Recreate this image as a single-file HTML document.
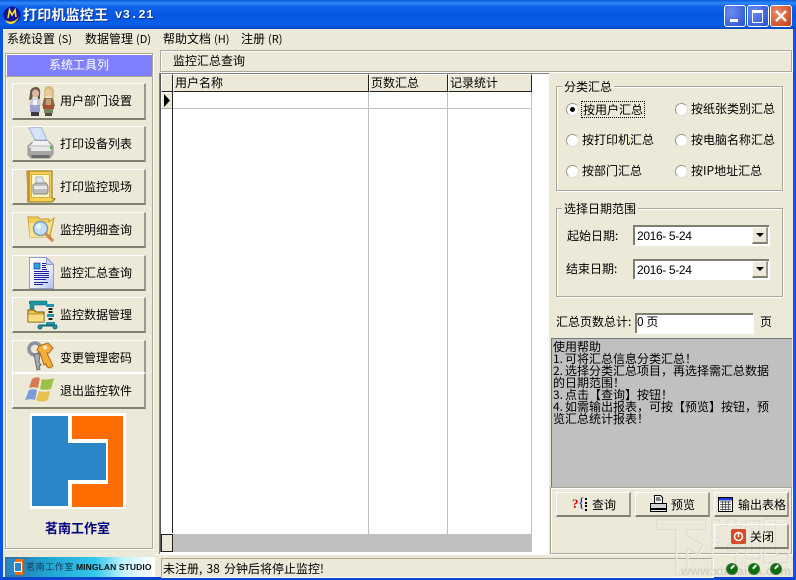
<!DOCTYPE html>
<html><head><meta charset="utf-8"><style>
html,body{margin:0;padding:0}
body{width:796px;height:580px;overflow:hidden;position:relative;background:#ECE9D8;font:12px/14px "WenQuanYi Zen Hei","Noto Sans CJK SC","Liberation Sans",sans-serif;color:#000}
div,svg{position:absolute}
.t{white-space:nowrap}
.m{font-size:11px;margin-left:3px}
.btn{background:#ECE9D8;border-top:1px solid #fff;border-left:1px solid #fff;border-right:2px solid #9c9a8c;border-bottom:2px solid #808070;box-sizing:border-box}
.sb{left:12px;width:134px}
.sl{left:60px;white-space:nowrap;font-size:12px}
.g{border:1px solid #aca899;box-shadow:1px 1px 0 #fff,inset 1px 1px 0 #fff;box-sizing:border-box}
.lg{background:#ECE9D8;padding:0 2px;white-space:nowrap}
.r{width:11px;height:11px;border-radius:50%;background:#fff;border:1px solid #9a988a;border-right-color:#ddd;border-bottom-color:#ddd;box-sizing:content-box}
.rl{white-space:nowrap}
.cb{background:#fff;border-top:2px solid #7f7d6f;border-left:2px solid #7f7d6f;box-sizing:border-box;box-shadow:1px 1px 0 #fff}
.hd{background:#ECE9D8;border-right:1px solid #222;border-bottom:1px solid #222;box-sizing:border-box;height:18px;top:74px;border-top:1px solid #fff;border-left:1px solid #fff;white-space:nowrap;padding-left:1px;line-height:15px}
.led{width:10px;height:10px;top:564px;border-radius:50%;background:#0b6e0b;box-shadow:0 0 0 1px #3c7a3c}
.led:after{content:"";position:absolute;left:3px;top:2px;width:5px;height:2px;background:#e8f4e8;transform:rotate(-45deg)}
.n{display:inline-block;width:12px}
.d{font-family:'Liberation Sans',sans-serif;font-size:12px;letter-spacing:-.35px}
</style></head><body>

<!-- window frame -->
<div style="left:0;top:0;width:796px;height:580px;box-sizing:border-box;border-left:3px solid #0A55E3;border-right:3px solid #0A55E3;border-bottom:3px solid #0A45D0"></div>
<!-- title bar -->
<div style="left:0;top:0;width:796px;height:29px;background:linear-gradient(180deg,#0A5AE0 0,#2F86F8 3px,#0E62EA 7px,#0656E0 16px,#0760EA 24px,#0554D8 27px,#0345BC 29px)"></div>
<svg style="left:3px;top:6px" width="18" height="18" viewBox="0 0 18 18"><circle cx="9" cy="9" r="8.500" fill="#12129a"/><path d="M2 14c5 3 11 2 14-4-1 5-5 8-8 8-3 0-5-2-6-4z" fill="#ffe11c"/><path d="M5 12l1.500-8 2.500 5 3-5 1 7" fill="none" stroke="#ffe11c" stroke-width="1.600"/></svg>
<div class="t" style="left:23px;top:7px;color:#fff;font-size:14px;line-height:16px;font-weight:bold;letter-spacing:0.2px;text-shadow:1px 1px 0 #0a2f9a">打印机监控王</div>
<div class="t" style="left:115px;top:7px;color:#fff;font:bold 12px/16px 'Liberation Mono',monospace;letter-spacing:0.6px;text-shadow:1px 1px 0 #0a2f9a">v3.21</div>
<!-- window buttons -->
<div style="left:724px;top:5px;width:20px;height:20px;border:1px solid #fff;border-radius:3px;background:radial-gradient(circle at 30% 30%,#6a8cf0,#2a4fd0)"><div style="left:5px;top:13px;width:8px;height:3px;background:#fff"></div></div>
<div style="left:747px;top:5px;width:20px;height:20px;border:1px solid #fff;border-radius:3px;background:radial-gradient(circle at 30% 30%,#6a8cf0,#2a4fd0)"><div style="left:4px;top:4px;width:9px;height:9px;border:1px solid #fff;border-top:3px solid #fff"></div></div>
<div style="left:770px;top:5px;width:20px;height:20px;border:1px solid #fff;border-radius:3px;background:radial-gradient(circle at 30% 30%,#ec8a68,#c63c14)"><svg style="left:4px;top:4px" width="12" height="12"><path d="M1 1l10 10M11 1L1 11" stroke="#fff" stroke-width="2.400"/></svg></div>

<!-- menu -->
<div class="t" style="left:7px;top:32px">系统设置<span class="m">(S)</span></div>
<div class="t" style="left:85px;top:32px">数据管理<span class="m">(D)</span></div>
<div class="t" style="left:163px;top:32px">帮助文档<span class="m">(H)</span></div>
<div class="t" style="left:241px;top:32px">注册<span class="m">(R)</span></div>

<!-- left panel -->
<div class="g" style="left:5px;top:53px;width:148px;height:496px"></div>
<div style="left:7px;top:55px;width:145px;height:21px;background:#8080FF"></div>
<div style="left:5px;top:76px;width:148px;height:1px;background:#aca899"></div>
<div class="t" style="left:49px;top:58px;color:#fff">系统工具列</div>

<div class="btn sb" style="top:83px;height:37px"></div>
<div class="btn sb" style="top:126px;height:36px"></div>
<div class="btn sb" style="top:169px;height:36px"></div>
<div class="btn sb" style="top:212px;height:36px"></div>
<div class="btn sb" style="top:255px;height:36px"></div>
<div class="btn sb" style="top:297px;height:36px"></div>
<div class="btn sb" style="top:340px;height:33px;border-bottom:1px solid #fff"></div>
<div class="btn sb" style="top:373px;height:36px"></div>
<div class="sl" style="top:94px">用户部门设置</div>
<div class="sl" style="top:137px">打印设备列表</div>
<div class="sl" style="top:180px">打印监控现场</div>
<div class="sl" style="top:223px">监控明细查询</div>
<div class="sl" style="top:266px">监控汇总查询</div>
<div class="sl" style="top:308px">监控数据管理</div>
<div class="sl" style="top:351px">变更管理密码</div>
<div class="sl" style="top:384px">退出监控软件</div>

<!-- icon: people -->
<svg style="left:26px;top:85px" width="30" height="34" viewBox="0 0 30 34">
<path d="M4 8c0-4 3-6 6-6s5 3 4 7l0 5h-2l-1-4H7l-1 5H3z" fill="#6b5848"/><ellipse cx="9.500" cy="8.500" rx="3.500" ry="4" fill="#dcb8a0"/><path d="M5 14h9l1 6-2 1 1 6H4l1-6-2-1z" fill="#c8c8dc"/><path d="M7 15h4v8H7z" fill="#f8f8fa"/><path d="M4 20h10v7H4z" fill="#8890c0" opacity=".75"/><path d="M5 27h8v4H5z" fill="#3c3844"/>
<path d="M18 7c0-4 2-6 5-6s5 2 5 6v6h-2l-1-3h-5l-1 4h-1z" fill="#d4c078"/><ellipse cx="22.500" cy="8" rx="3.300" ry="3.800" fill="#eccaa8"/><path d="M18 13h9l2 8-2 1v5H18v-5l-2-1z" fill="#8c6a48"/><path d="M20 14h5v7h-5z" fill="#c0a070"/><path d="M17 20h11v4H17z" fill="#a84a38"/><path d="M18 24h9v4h-9z" fill="#78885c"/><path d="M19 28h7v3h-7z" fill="#4c4c38"/></svg>
<!-- icon: printer -->
<svg style="left:26px;top:127px" width="30" height="34" viewBox="0 0 30 34">
<path d="M3 1l12-1 6 13H9z" fill="#d4e2fa" stroke="#a4b6d8"/><path d="M2 19l6-5h14l5 5v8l-3 4H5l-3-3z" fill="#d2d2d2" stroke="#8a8a8a"/><path d="M7 14h15l2 4H6z" fill="#f2f2f2"/><path d="M2 21h25v6l-3 4H5l-3-3z" fill="#a4a4a4"/><path d="M5 20h20v4H5z" fill="#e8e8e8"/><path d="M5 28h19l-1 3H6z" fill="#6c6c6c"/><rect x="24" y="19" width="2" height="3" fill="#44b044"/></svg>
<!-- icon: printer on gold book -->
<svg style="left:26px;top:170px" width="31" height="34" viewBox="0 0 31 34">
<path d="M1 1h25v27l3 1-3 3H2z" fill="#f4cf5a" stroke="#8e7010"/><rect x="1" y="1" width="3" height="31" fill="#c49a20"/><rect x="5.500" y="4.500" width="18" height="23" fill="#fff4c4" stroke="#d8b040"/><path d="M10 7h6l3 7h-9z" fill="#dce8f8" stroke="#a8b4c8"/><path d="M7 15l3-2h10l2 3v6l-1 2H8l-1-2z" fill="#bcbcbc" stroke="#8a8a8a"/><path d="M8 16h13v3H8z" fill="#e8e8e8"/></svg>
<!-- icon: folder search -->
<svg style="left:27px;top:215px" width="30" height="32" viewBox="0 0 30 32">
<path d="M1 2h10l2 2h9v3l5-4-4 19H3z" fill="#f4cd58" stroke="#c89c30"/><path d="M2 8h19l5-3-5 17H3z" fill="#fbe490"/><circle cx="13.500" cy="13.500" r="7" fill="#c8def6" stroke="#7a9cc0" stroke-width="1.600"/><circle cx="11.500" cy="11.500" r="2.500" fill="#eef6fe"/><path d="M18.500 18.500l7.500 7.500" stroke="#d4884c" stroke-width="3.200"/></svg>
<!-- icon: document -->
<svg style="left:29px;top:257px" width="25" height="32" viewBox="0 0 25 32">
<defs><linearGradient id="dg" x1="0" x2="1" y1="0" y2="1"><stop offset="0" stop-color="#fff"/><stop offset=".6" stop-color="#e8ecfa"/><stop offset="1" stop-color="#aebcec"/></linearGradient></defs>
<path d="M.5.500h17l7 7v24H.5z" fill="url(#dg)" stroke="#8e9ed0"/><path d="M17.500.500v7h7z" fill="#c8d2f2" stroke="#8e9ed0"/><rect x="5" y="6" width="6" height="6" fill="#26a4dc" stroke="#1c1ca0" stroke-width=".6"/><path d="M13 6.500h4M13 8.500h4M13 10.500h4M13 12.500h5M5 14.500h15M5 16.500h15M5 18.500h15M5 20.500h15M5 22.500h12M5 25.500h14M5 27.500h9" stroke="#1c1ca0" stroke-width="1"/></svg>
<!-- icon: data -->
<svg style="left:27px;top:300px" width="31" height="30" viewBox="0 0 31 30">
<path d="M3 4V2h17" fill="none" stroke="#188898" stroke-width="2"/><path d="M3 1h17v4H7v4H3z" fill="#1a96a8" stroke="#115a68" stroke-width=".5"/><path d="M1 10h6l2 2h8v10H1z" fill="#f2c84e" stroke="#6a5008"/><path d="M1 14h16v8H1z" fill="#f8dc80" stroke="#6a5008" stroke-width=".5"/><path d="M19 4h8v3h-8zM20 14h7v3h-7zM19 22h9v3h-9z" fill="#1a96a8"/><path d="M21.500 8h4v2h-4zM21.500 11h4v2h-4zM21.500 18h4v2h-4z" fill="#222"/><path d="M12 25.500h18" stroke="#146a78" stroke-width="2"/><circle cx="13" cy="27" r="2" fill="#1a96a8" stroke="#146a78"/><circle cx="28" cy="27" r="2" fill="#1a96a8" stroke="#146a78"/></svg>
<!-- icon: keys -->
<svg style="left:26px;top:341px" width="30" height="32" viewBox="0 0 30 32">
<circle cx="9" cy="8" r="6" fill="none" stroke="#8e929c" stroke-width="3.600"/><path d="M8 13l3 16 3-1-1-3 2-1-2-3 1-8z" fill="#a8acb6" stroke="#6a6a70"/><path d="M13 5l9-3 5 5-4 5-2 0 6 13-3 2-3-1-1-3-2 1-4-12-3-3z" fill="#f2ae38" stroke="#b06c14"/><circle cx="19" cy="6.500" r="2" fill="#fff0c4"/></svg>
<!-- icon: windows flag -->
<svg style="left:25px;top:376px" width="31" height="28" viewBox="0 0 31 28">
<path d="M7 3c3-2 6-2 8-1l-2 10c-3-1-6-1-9 0z" fill="#d87a50"/><path d="M17 3c3 1 7 1 12-1l-3 11c-5 1-8 1-11 0z" fill="#9cc048"/><path d="M4 14c3-1 6-1 8 0l-2 10c-3-1-6-1-10 0z" fill="#7c9cd8"/><path d="M14 15c3 1 7 1 11 0l-2 9c-4 2-9 2-12 0z" fill="#e8c04c"/></svg>

<!-- logo -->
<div style="left:30px;top:413px;width:96px;height:96px;background:#fff"></div>
<div style="left:32px;top:416px;width:36px;height:90px;background:#2B86C8"></div>
<div style="left:72px;top:416px;width:51px;height:91px;background:#FF6D00"></div>
<div style="left:68px;top:439px;width:40px;height:45px;background:#fff"></div>
<div style="left:68px;top:443px;width:38px;height:37px;background:#2B86C8"></div>
<div class="t" style="left:45px;top:520px;font-size:13px;line-height:16px;font-weight:bold;color:#000080">茗南工作室</div>

<!-- banner -->
<div style="left:5px;top:557px;width:150px;height:20px;overflow:hidden;background:linear-gradient(90deg,#2a7ab0 0,#2a7ab0 8%,#20a0d0 25%,#30c8ea 60%,#c8f4fc 80%,#fff 100%)"></div>
<div style="left:7px;top:559px;width:16px;height:16px;background:#FF6D00"></div>
<div style="left:7px;top:559px;width:8px;height:16px;background:#2B86C8"></div>
<div style="left:15px;top:563px;width:6px;height:8px;background:#2B86C8;box-shadow:0 0 0 1px #fff"></div>
<div class="t" style="left:26px;top:560px;font-size:9px;color:#123c58;letter-spacing:.6px">茗南工作室</div>
<div class="t" style="left:76px;top:561px;font:bold 8.500px/13px 'Liberation Sans',sans-serif;color:#111;letter-spacing:.1px">MINGLAN STUDIO</div>

<!-- header strip -->
<div class="g" style="left:160px;top:50px;width:632px;height:22px"></div>
<div class="t" style="left:173px;top:54px">监控汇总查询</div>

<!-- grid -->
<div style="left:159px;top:73px;width:390px;height:481px;background:#fff;border-top:1px solid #808080;border-left:1px solid #808080;box-sizing:border-box"></div>
<div style="left:160px;top:74px;width:1px;height:478px;background:#555"></div>
<div class="hd" style="left:161px;width:12px"></div>
<div class="hd" style="left:173px;width:196px">用户名称</div>
<div class="hd" style="left:369px;width:79px">页数汇总</div>
<div class="hd" style="left:448px;width:84px">记录统计</div>
<div style="left:161px;top:92px;width:12px;height:17px;background:#ECE9D8;border:1px solid #fff;border-right:1px solid #222;border-bottom:1px solid #aaa;box-sizing:border-box"></div>
<svg style="left:163px;top:94px" width="8" height="13"><path d="M1 0l6 6.500-6 6.500z" fill="#000"/></svg>
<div style="left:172px;top:92px;width:1px;height:441px;background:#222"></div>
<div style="left:173px;top:108px;width:359px;height:1px;background:#c0c0c0"></div>
<div style="left:368px;top:92px;width:1px;height:442px;background:#c0c0c0"></div>
<div style="left:447px;top:92px;width:1px;height:442px;background:#c0c0c0"></div>
<div style="left:531px;top:92px;width:1px;height:442px;background:#c0c0c0"></div>
<div style="left:161px;top:534px;width:12px;height:18px;background:#ECE9D8;border:1px solid #222;box-sizing:border-box"></div>
<div style="left:173px;top:534px;width:359px;height:18px;background:#c0c0c0"></div>

<!-- status -->
<div style="left:161px;top:558px;width:553px;height:20px;border-top:1px solid #aca899;border-left:1px solid #aca899;border-right:1px solid #fff;border-bottom:1px solid #fff;box-sizing:border-box"></div>
<div style="left:155px;top:554px;width:395px;height:1px;background:#fff"></div>
<div class="t" style="left:163px;top:562px;word-spacing:1.500px">未注册, 38 分钟后将停止监控!</div>

<!-- group 1 -->
<div class="g" style="left:556px;top:86px;width:227px;height:105px"></div>
<div class="t lg" style="left:562px;top:80px">分类汇总</div>
<div class="r" style="left:566px;top:103px"></div><div style="left:570px;top:107px;width:5px;height:5px;border-radius:50%;background:#000"></div>
<div class="rl" style="left:582px;top:102px;outline:1px dotted #000;padding:0 1px;line-height:15px">按用户汇总</div>
<div class="r" style="left:675px;top:103px"></div><div class="rl" style="left:691px;top:102px">按纸张类别汇总</div>
<div class="r" style="left:566px;top:134px"></div><div class="rl" style="left:582px;top:133px">按打印机汇总</div>
<div class="r" style="left:675px;top:134px"></div><div class="rl" style="left:691px;top:133px">按电脑名称汇总</div>
<div class="r" style="left:566px;top:165px"></div><div class="rl" style="left:582px;top:164px">按部门汇总</div>
<div class="r" style="left:675px;top:165px"></div><div class="rl" style="left:691px;top:164px">按IP地址汇总</div>

<!-- group 2 -->
<div class="g" style="left:556px;top:208px;width:227px;height:89px"></div>
<div class="t lg" style="left:562px;top:202px">选择日期范围</div>
<div class="t" style="left:567px;top:229px">起始日期:</div>
<div class="t" style="left:566px;top:262px">结束日期:</div>
<div class="cb" style="left:633px;top:225px;width:136px;height:20px"></div>
<div class="t d" style="left:637px;top:229px">2016- 5-24</div>
<div class="btn" style="left:752px;top:227px;width:16px;height:17px"></div>
<svg style="left:756px;top:233px" width="9" height="5"><path d="M0 0h8L4 4z" fill="#000"/></svg>
<div class="cb" style="left:633px;top:259px;width:136px;height:20px"></div>
<div class="t d" style="left:637px;top:263px">2016- 5-24</div>
<div class="btn" style="left:752px;top:261px;width:16px;height:17px"></div>
<svg style="left:756px;top:267px" width="9" height="5"><path d="M0 0h8L4 4z" fill="#000"/></svg>

<!-- total -->
<div class="t" style="left:556px;top:315px">汇总页数总计:</div>
<div class="cb" style="left:635px;top:313px;width:118px;height:20px"></div>
<div class="t" style="left:637px;top:315px">0 页</div>
<div class="t" style="left:760px;top:315px">页</div>

<!-- help -->
<div style="left:551px;top:338px;width:241px;height:149px;background:#C0C0C0;border-top:1px solid #777;border-left:1px solid #777;box-sizing:border-box"></div>
<div class="t" style="left:553px;top:341px;line-height:12px;font-size:12px">使用帮助<br><span class="n">1.</span>可将汇总信息分类汇总！<br><span class="n">2.</span>选择分类汇总项目，再选择需汇总数据<br>的日期范围！<br><span class="n">3.</span>点击【查询】按钮！<br><span class="n">4.</span>如需输出报表，可按【预览】按钮，预<br>览汇总统计报表！</div>

<!-- bottom panel -->
<div class="g" style="left:550px;top:487px;width:242px;height:67px"></div>

<!-- watermark -->
<svg style="left:650px;top:512px" width="146" height="68" viewBox="0 0 146 68">
<g fill="none" stroke-width="1">
<g stroke="#f6f4ea" transform="translate(1 1)"><path d="M7 8h49v10H37v6l16 9-5 9-11-6v27H26V18H7z"/><path d="M62 8h8v6h8V8h8v6h5v7h-5v5h6v7H78v6h8v16l-24 4V31h8v-5h-8z"/><path d="M96 9h14v38H96zM102 16v24M114 7h12v36h12V7h0v44h-24zM126 7h12"/></g>
<g stroke="#d8d5c6"><path d="M7 8h49v10H37v6l16 9-5 9-11-6v27H26V18H7z"/><path d="M62 8h8v6h8V8h8v6h5v7h-5v5h6v7H78v6h8v16l-24 4V31h8v-5h-8z"/><path d="M96 9h14v38H96zM102 16v24M114 7h12v36h12V7h0v44h-24zM126 7h12"/></g>
</g>
</svg>
<div class="t" style="left:681px;top:564px;font:bold 12px/14px 'Liberation Sans',sans-serif;color:#d4d1c2;letter-spacing:.3px">www.xiazaiba.com</div>

<!-- action buttons -->
<div class="btn" style="left:556px;top:492px;width:75px;height:25px"></div>
<div class="btn" style="left:635px;top:492px;width:75px;height:25px"></div>
<div class="btn" style="left:714px;top:492px;width:75px;height:25px"></div>
<div class="btn" style="left:714px;top:524px;width:75px;height:25px;background:transparent"></div>
<div class="t" style="left:572px;top:497px;color:#e00000;font:bold 13px/14px 'Liberation Serif',serif">?</div>
<div class="t" style="left:578px;top:496px;color:#0000c8;font:14px/16px 'Liberation Serif',serif">{</div>
<svg style="left:584px;top:498px" width="4" height="13"><path d="M1 0h2v2H1zM1 4h2v2H1zM1 7h2v2H1zM1 11h2v2H1z" fill="#000"/></svg>
<div class="t" style="left:592px;top:498px">查询</div>
<svg style="left:650px;top:495px" width="17" height="18" viewBox="0 0 17 18"><path d="M4.500.500h6l2 2v6h-8z" fill="#fff" stroke="#000"/><path d="M6 3h4M6 5h5" stroke="#000"/><path d="M.5 8.500h16v5H.5z" fill="#d4d4d4" stroke="#000"/><path d="M.5 14.500h16v2H.5z" fill="#eee" stroke="#000"/></svg>
<div class="t" style="left:671px;top:498px">预览</div>
<svg style="left:718px;top:497px" width="15" height="15" viewBox="0 0 15 15"><rect x=".5" y=".5" width="14" height="14" fill="#fff" stroke="#000"/><rect x="1" y="1" width="13" height="2.500" fill="#1c3cd8"/><path d="M2 5h11M2 7.500h11M2 10h11M2 12.500h11M4.500 4v9.500M7.500 4v9.500M10.500 4v9.500" stroke="#333" stroke-width=".7"/></svg>
<div class="t" style="left:738px;top:498px">输出表格</div>
<svg style="left:731px;top:529px" width="15" height="15" viewBox="0 0 15 15"><rect width="15" height="15" rx="2" fill="#d84a28"/><circle cx="7.500" cy="7.500" r="4" fill="none" stroke="#fff" stroke-width="1.500"/><path d="M7.500 3v5" stroke="#fff" stroke-width="1.500"/></svg>
<div class="t" style="left:750px;top:530px">关闭</div>

<!-- LEDs -->
<div class="led" style="left:727px"></div>
<div class="led" style="left:749px"></div>
<div class="led" style="left:771px"></div>
</body></html>
